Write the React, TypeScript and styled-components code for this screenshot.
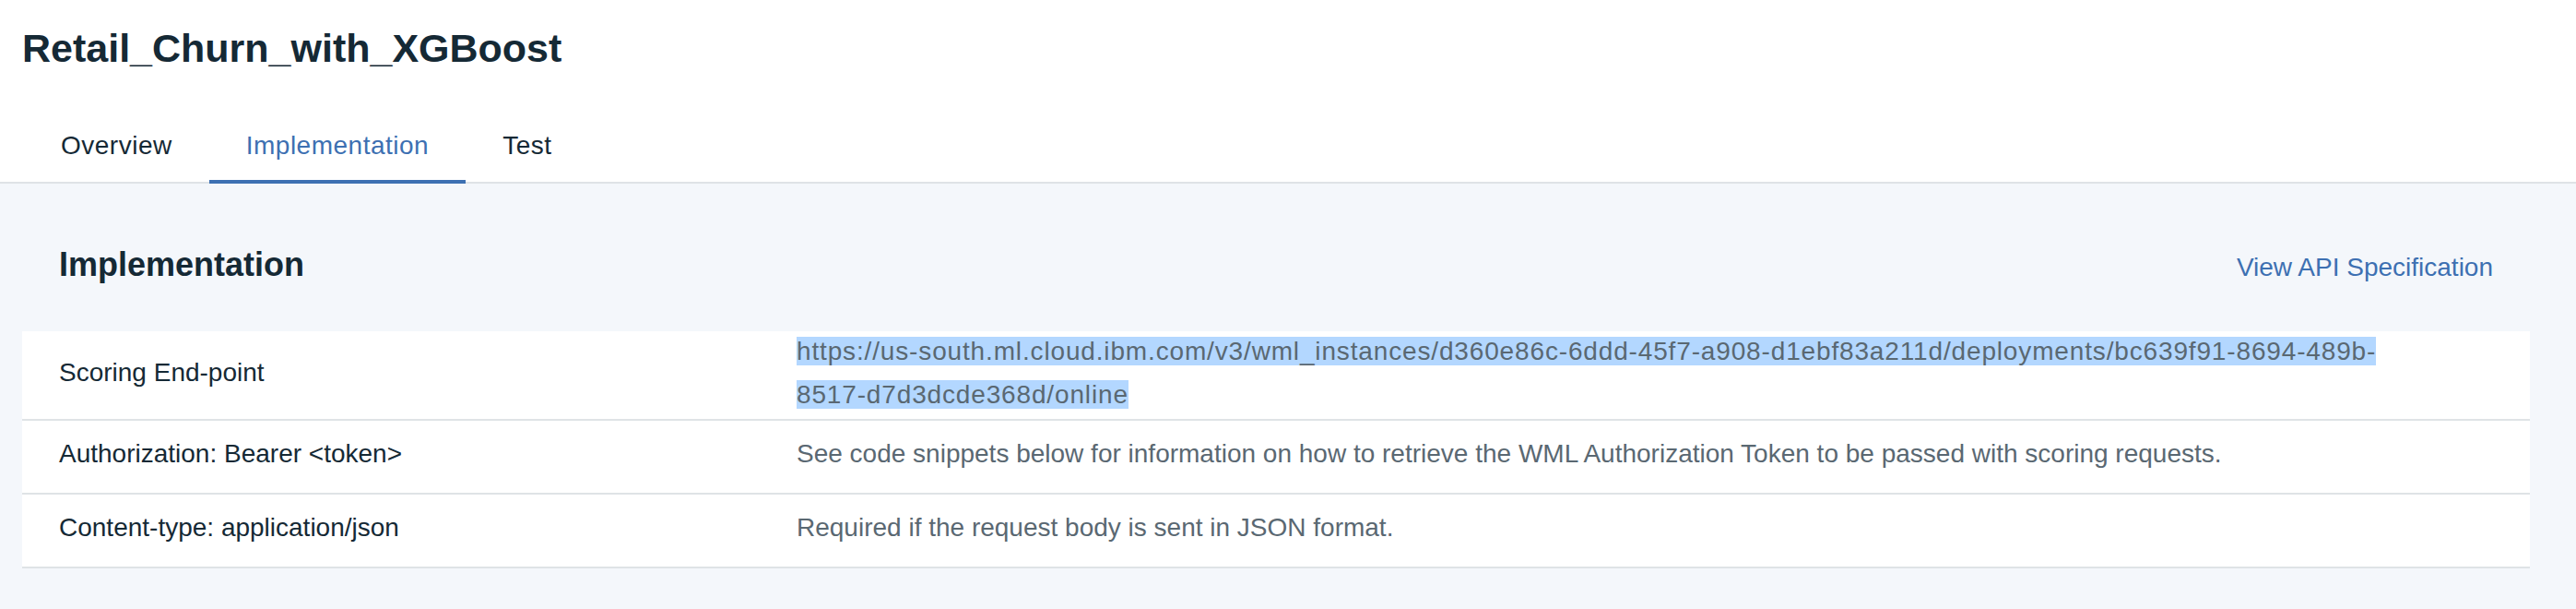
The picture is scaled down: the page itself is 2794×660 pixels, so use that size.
import React from "react";
import styled, { createGlobalStyle } from "styled-components";

const GlobalStyle = createGlobalStyle`
  html, body {
    margin: 0;
    padding: 0;
    background: #f4f7fb;
  }
  body {
    font-family: "Liberation Sans", Arial, Helvetica, sans-serif;
    color: #152935;
  }
  *, *::before, *::after {
    box-sizing: border-box;
  }
`;

const Page = styled.div`
  min-height: 100vh;
  display: flex;
  flex-direction: column;
`;

const Header = styled.header`
  background: #ffffff;
  padding-top: 26px;
`;

const Title = styled.h1`
  margin: 0 0 0 24px;
  font-size: 43px;
  line-height: 52px;
  font-weight: 700;
  color: #152935;
`;

const TabList = styled.nav`
  margin-top: 42px;
  padding-left: 26px;
  display: flex;
  border-bottom: 2px solid #dfe3e6;
`;

const Tab = styled.a<{ $active?: boolean }>`
  display: block;
  padding: 22px 40px 21px;
  margin-bottom: -2px;
  font-size: 28px;
  line-height: 32px;
  letter-spacing: 0.5px;
  color: ${(p) => (p.$active ? "#3d70b2" : "#152935")};
  border-bottom: 4px solid ${(p) => (p.$active ? "#3d70b2" : "transparent")};
  text-decoration: none;
  cursor: pointer;
`;

const Content = styled.main`
  flex: 1;
  padding: 66px 50px 40px 24px;
`;

const SectionHeader = styled.div`
  display: flex;
  justify-content: space-between;
  align-items: baseline;
  padding: 0 40px;
  margin-bottom: 50px;
`;

const SectionTitle = styled.h2`
  margin: 0;
  font-size: 36px;
  line-height: 44px;
  font-weight: 700;
  color: #152935;
`;

const SpecLink = styled.a`
  font-size: 28px;
  line-height: 32px;
  color: #3d70b2;
  text-decoration: none;
  cursor: pointer;
`;

const Table = styled.div`
  background: #ffffff;
`;

const Row = styled.div<{ $h: number; $pt: number }>`
  display: grid;
  grid-template-columns: 840px 1fr;
  align-items: start;
  height: ${(p) => p.$h}px;
  padding-top: ${(p) => p.$pt}px;
  border-bottom: 2px solid #dfe3e6;
`;

const Label = styled.div`
  padding-left: 40px;
  font-size: 28px;
  line-height: 32px;
  color: #152935;
`;

const Value = styled.div`
  font-size: 28px;
  line-height: 32px;
  color: #5a6872;
`;

const UrlValue = styled(Value)`
  line-height: 47px;
  letter-spacing: 0.85px;
  margin-top: -31px;
  max-width: 1760px;
`;

const Selected = styled.span`
  background: #b3d7ff;
`;

const url =
  "https://us-south.ml.cloud.ibm.com/v3/wml_instances/d360e86c-6ddd-45f7-a908-d1ebf83a211d/deployments/bc639f91-8694-489b-8517-d7d3dcde368d/online";

export default function App() {
  return (
    <>
      <GlobalStyle />
      <Page>
        <Header>
          <Title>Retail_Churn_with_XGBoost</Title>
          <TabList>
            <Tab>Overview</Tab>
            <Tab $active>Implementation</Tab>
            <Tab>Test</Tab>
          </TabList>
        </Header>
        <Content>
          <SectionHeader>
            <SectionTitle>Implementation</SectionTitle>
            <SpecLink>View API Specification</SpecLink>
          </SectionHeader>
          <Table>
            <Row $h={97} $pt={29}>
              <Label>Scoring End-point</Label>
              <UrlValue>
                <Selected>{url}</Selected>
              </UrlValue>
            </Row>
            <Row $h={80} $pt={20}>
              <Label>Authorization: Bearer &lt;token&gt;</Label>
              <Value>
                See code snippets below for information on how to retrieve the WML Authorization Token to be passed with scoring requests.
              </Value>
            </Row>
            <Row $h={80} $pt={20}>
              <Label>Content-type: application/json</Label>
              <Value>Required if the request body is sent in JSON format.</Value>
            </Row>
          </Table>
        </Content>
      </Page>
    </>
  );
}
